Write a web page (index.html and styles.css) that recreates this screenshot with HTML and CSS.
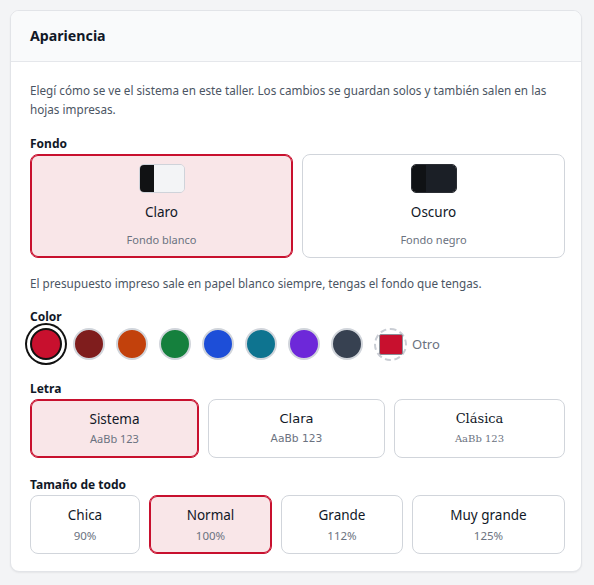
FILE: index.html
```html
<!DOCTYPE html>
<html lang="es">
<head>
<meta charset="utf-8">
<title>Apariencia</title>
<link rel="stylesheet" href="styles.css">
</head>
<body>
<section class="card">
  <header class="card-head">
    <h2 class="card-title">Apariencia</h2>
  </header>
  <div class="card-body">
    <p class="desc">Elegí cómo se ve el sistema en este taller. Los cambios se guardan solos y también salen en las hojas impresas.</p>

    <div class="group group-fondo">
      <div class="label">Fondo</div>
      <div class="fondo-grid">
        <button class="opt fondo selected">
          <span class="thumb thumb-light"><span class="t-left"></span><span class="t-right"></span></span>
          <span class="opt-title">Claro</span>
          <span class="opt-sub">Fondo blanco</span>
        </button>
        <button class="opt fondo">
          <span class="thumb thumb-dark"><span class="t-left"></span><span class="t-right"></span></span>
          <span class="opt-title">Oscuro</span>
          <span class="opt-sub">Fondo negro</span>
        </button>
      </div>
    </div>

    <p class="note">El presupuesto impreso sale en papel blanco siempre, tengas el fondo que tengas.</p>

    <div class="group group-color">
      <div class="label">Color</div>
      <div class="swatches">
        <span class="sw sw-selected c-red"></span>
        <span class="sw c-wine"></span>
        <span class="sw c-orange"></span>
        <span class="sw c-green"></span>
        <span class="sw c-blue"></span>
        <span class="sw c-teal"></span>
        <span class="sw c-violet"></span>
        <span class="sw c-slate"></span>
        <span class="sw-other"><span class="sw-other-fill"></span></span>
        <span class="other-label">Otro</span>
      </div>
    </div>

    <div class="group group-letra">
      <div class="label">Letra</div>
      <div class="letra-grid">
        <button class="opt small selected">
          <span class="opt-title">Sistema</span>
          <span class="opt-sub">AaBb 123</span>
        </button>
        <button class="opt small f-clara">
          <span class="opt-title">Clara</span>
          <span class="opt-sub">AaBb 123</span>
        </button>
        <button class="opt small f-clasica">
          <span class="opt-title">Clásica</span>
          <span class="opt-sub">AaBb 123</span>
        </button>
      </div>
    </div>

    <div class="group group-size">
      <div class="label">Tamaño de todo</div>
      <div class="size-grid">
        <button class="opt small size">
          <span class="opt-title">Chica</span>
          <span class="opt-sub">90%</span>
        </button>
        <button class="opt small size selected">
          <span class="opt-title">Normal</span>
          <span class="opt-sub">100%</span>
        </button>
        <button class="opt small size">
          <span class="opt-title">Grande</span>
          <span class="opt-sub">112%</span>
        </button>
        <button class="opt small size">
          <span class="opt-title">Muy grande</span>
          <span class="opt-sub">125%</span>
        </button>
      </div>
    </div>
  </div>
</section>
</body>
</html>
```

FILE: styles.css
```css
* { box-sizing: border-box; }

html, body {
  margin: 0;
  padding: 0;
  background: #f3f4f6;
}

body {
  padding: 10px 12px 12px 10px;
  font-family: "Noto Sans", "Open Sans", sans-serif;
  color: #111827;
}

.card {
  background: #ffffff;
  border: 1px solid #e2e4e8;
  border-radius: 9px;
  box-shadow: 0 1px 2px rgba(0, 0, 0, 0.06);
  overflow: hidden;
  height: 562px;
}

.card-head {
  background: #f9fafb;
  border-bottom: 1px solid #e5e7eb;
  padding: 14px 19px;
  height: 51px;
}

.card-title {
  margin: 0;
  font-size: 14.2px;
  line-height: 22px;
  font-weight: 700;
  color: #111827;
}

.card-body {
  padding: 19px 16px 16px 19px;
}

.desc {
  margin: 0;
  font-size: 11.7px;
  line-height: 19px;
  color: #4b5563;
}

.note {
  margin: 16px 0 0;
  font-size: 11.7px;
  line-height: 18px;
  color: #4b5563;
}

.label {
  font-size: 12px;
  line-height: 16px;
  font-weight: 700;
  color: #111827;
}

.group-fondo { margin-top: 17px; }
.group-fondo .label { margin-bottom: 2px; }

.group-color { margin-top: 17px; }
.group-color .label { margin-bottom: 3px; }

.group-letra { margin-top: 21px; }
.group-letra .label { margin-bottom: 2px; }

.group-size { margin-top: 19px; }
.group-size .label { margin-bottom: 2px; }

.fondo-grid {
  display: grid;
  grid-template-columns: 1fr 1fr;
  gap: 9px;
}

.letra-grid {
  display: grid;
  grid-template-columns: 169fr 177fr 171fr;
  gap: 9px;
}

.size-grid {
  display: grid;
  grid-template-columns: 110fr 123fr 122fr 153fr;
  gap: 9px;
}

.opt {
  display: flex;
  flex-direction: column;
  align-items: center;
  margin: 0;
  font: inherit;
  color: #111827;
  background: #ffffff;
  border: 1px solid #d1d5db;
  border-radius: 8px;
  cursor: pointer;
}

.opt.selected {
  background: #f9e6e8;
  border-color: #c8102e;
  box-shadow: inset 0 0 0 1px #c8102e;
}

.opt.fondo {
  height: 104px;
  padding: 9px 10px;
}

.thumb {
  display: flex;
  width: 46px;
  height: 29px;
  border-radius: 5px;
  overflow: hidden;
  border: 1px solid #cfd3da;
}

.thumb-light .t-left { width: 14px; background: #111214; }
.thumb-light .t-right { flex: 1; background: #f3f4f6; }
.thumb-dark { border-color: #2a2d33; }
.thumb-dark .t-left { width: 14px; background: #101215; }
.thumb-dark .t-right { flex: 1; background: #1b1f26; }

.fondo .opt-title {
  margin-top: 9px;
  font-size: 13.5px;
  line-height: 20px;
}

.fondo .opt-sub {
  margin-top: 10px;
  font-size: 11px;
  line-height: 16px;
  color: #6b7280;
}

.opt.small {
  height: 59px;
  padding: 10px 8px 0;
}

.small .opt-title {
  font-size: 13.5px;
  line-height: 18px;
}

.small .opt-sub {
  margin-top: 3px;
  font-size: 11px;
  line-height: 16px;
  color: #6b7280;
}

.size { padding-top: 11px; }
.size .opt-sub { margin-top: 4px; font-size: 11.5px; }

.f-clara .opt-title,
.f-clara .opt-sub {
  font-family: "DejaVu Sans", sans-serif;
}
.f-clara .opt-title { font-size: 13px; }
.f-clara .opt-sub { font-size: 10.7px; }

.f-clasica .opt-title,
.f-clasica .opt-sub {
  font-family: "DejaVu Serif", serif;
}
.f-clasica .opt-title { font-size: 13px; }
.f-clasica .opt-sub { font-size: 10px; }

.swatches {
  display: flex;
  align-items: center;
  gap: 11px;
  height: 32px;
}

.sw {
  display: block;
  width: 32px;
  height: 32px;
  border-radius: 50%;
  border: 2px solid #d1d5db;
  flex: none;
}

.sw-selected {
  border-color: #111111;
  box-shadow: 0 0 0 3px #ffffff, 0 0 0 5px #111111;
}

.c-red { background: #c8102e; }
.c-wine { background: #7f1d1d; }
.c-orange { background: #c2410c; }
.c-green { background: #15803d; }
.c-blue { background: #1d4ed8; }
.c-teal { background: #0e7490; }
.c-violet { background: #6d28d9; }
.c-slate { background: #374151; }

.sw-other {
  display: flex;
  align-items: center;
  justify-content: center;
  width: 33px;
  height: 33px;
  border-radius: 50%;
  border: 2px dashed #c9cdd4;
  flex: none;
}

.sw-other-fill {
  display: block;
  width: 24px;
  height: 21px;
  background: #c8102e;
  border: 1px solid #8a8f98;
  border-radius: 2px;
}

.other-label {
  margin-left: -6px;
  font-size: 13px;
  color: #6b7280;
}
```
